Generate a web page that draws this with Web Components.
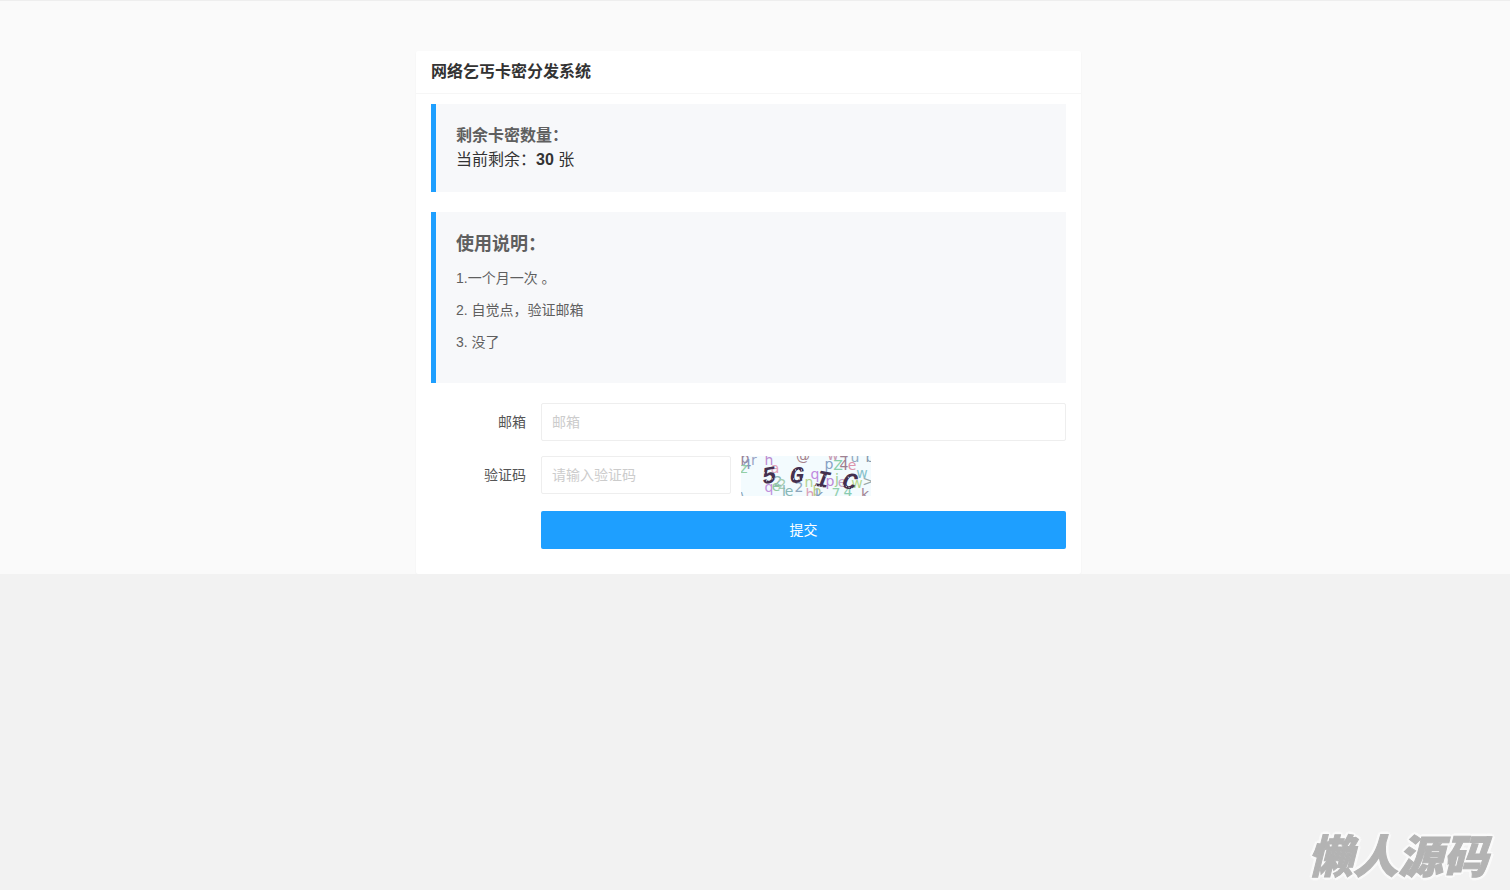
<!DOCTYPE html>
<html lang="zh-CN">
<head>
<meta charset="utf-8">
<meta name="viewport" content="width=device-width, initial-scale=1">
<title>网络乞丐卡密分发系统</title>
<style>
  html { background: #f2f2f2; }
  body { margin: 0; font: 14px/24px "Liberation Sans", "Noto Sans CJK SC", sans-serif; color: #333; }
</style>
</head>
<body>
<card-page>
  <panel-card heading="网络乞丐卡密分发系统">
    <quote-block heading="剩余卡密数量：">
      <stock-count count="30"></stock-count>
    </quote-block>
    <quote-block heading="使用说明：" size="large">
      <p>1.一个月一次 。</p>
      <p>2. 自觉点，验证邮箱</p>
      <p>3. 没了</p>
    </quote-block>
    <claim-form></claim-form>
  </panel-card>
</card-page>
<site-mark>懒人源码</site-mark>

<script>
class BaseElement extends HTMLElement {
  constructor() {
    super();
    this.attachShadow({ mode: "open" });
  }
  connectedCallback() {
    this.shadowRoot.innerHTML = this.render();
  }
}

class CardPage extends BaseElement {
  render() {
    return `<style>
      :host { display: block; box-sizing: border-box; background: #fafafa; border-top: 1px solid #eee; padding: 50px 13px 0 0; }
      main { width: 100%; max-width: 665px; margin: 0 auto; }
    </style><main><slot></slot></main>`;
  }
}

class PanelCard extends BaseElement {
  render() {
    return `<style>
      :host { display: block; background: #fff; border-radius: 2px; box-shadow: 0 1px 2px rgba(0,0,0,.05); }
      header { padding: 0 15px; border-bottom: 1px solid #f6f6f6; }
      h1 { margin: 0; font-size: 16px; line-height: 42px; font-weight: 700; }
      .body { display: flex; flex-direction: column; gap: 20px; padding: 10px 15px 25px; }
    </style>
    <header><h1>${this.getAttribute("heading")}</h1></header>
    <div class="body"><slot></slot></div>`;
  }
}

class QuoteBlock extends BaseElement {
  render() {
    return `<style>
      :host { display: block; padding: 20px; border-left: 5px solid #1e9fff; background: #f7f8fa; color: #5f5f5f; }
      h2 { margin: 0; font-size: 16px; line-height: 24px; font-weight: 700; }
      :host([size="large"]) h2 { margin-bottom: 10px; font-size: 18px; line-height: 25px; }
      ::slotted(p) { margin: 0 0 10px; line-height: 22px; }
    </style>
    <h2>${this.getAttribute("heading")}</h2><slot></slot>`;
  }
}

class StockCount extends BaseElement {
  render() {
    return `<style>:host { display: block; font-size: 16px; line-height: 24px; color: #333; }</style>当前剩余：<b>${this.getAttribute("count")}</b> 张`;
  }
}

class CaptchaImage extends BaseElement {
  render() {
    // [character, centre x, baseline y, colour]
    const noise = [
      ["p", 4, 7, "#9a8296"], ["4", 6, 13, "#8795b8"], ["r", 13, 9, "#9aa4c4"], ["z", 3, 17, "#93cfa5"],
      ["h", 28, 9, "#bd8bd0"], ["a", 34, 17, "#e3a0b8"], ["q", 28, 36, "#c08fdc"], ["2", 37, 30, "#8fb5b4"],
      ["2", 41, 33, "#a5cdb0"], ["e", 35, 35, "#90c8a0"], ["l", 43, 40, "#87b6b5"], ["e", 48, 40, "#87b6b5"],
      ["2", 58, 36, "#8ea6bd"], ["@", 62, 5, "#a58088"], ["w", 92, 4, "#c99bb2"], ["4", 103, 4, "#a08293"],
      ["u", 114, 6, "#92aac0"], ["b", 129, 6, "#8799ad"],
      ["p", 88, 13, "#87a1c5"], ["Z", 97, 14, "#88ceaa"], ["4", 103, 14, "#9b7d8d"], ["e", 111, 14, "#dc94ac"],
      ["w", 121, 22, "#86c1ca"], ["q", 74, 23, "#c08ade"], ["p", 89, 30, "#bb88d6"], ["j", 96, 28, "#9dcd91"],
      ["e", 101, 31, "#c4a3cb"], ["w", 116, 32, "#b4d68d"], [">", 127, 30, "#98a8a8"], ["n", 68, 31, "#b3d491"],
      ["h", 69, 43, "#dca1b8"], ["b", 76, 40, "#b9cc85"], ["k", 78, 44, "#819bc2"], ["7", 95, 42, "#92d0ae"],
      ["4", 107, 41, "#88cbb0"], ["k", 124, 43, "#a28593"], ["\\", 2, 46, "#8ba6b8"]
    ];
    // [character, centre x, centre y, rotation]
    const code = [["5", 28, 19, -10], ["G", 56, 19, 0], ["I", 82, 23, 10], ["C", 109, 25, 14]];
    return `<style>
      :host { display: block; }
      button { display: block; padding: 0; border: 0; background: none; cursor: pointer; }
      svg { display: block; }
      .noise { font: 14px "DejaVu Sans", sans-serif; text-anchor: middle; }
      .code { font: italic bold 24px "Liberation Mono", monospace; text-anchor: middle; fill: #44304f; }
      .scratch { stroke: #f3fbfe; stroke-width: 1; stroke-dasharray: 1 2; }
    </style>
    <button type="button" aria-label="刷新验证码"><svg width="130" height="40" viewBox="0 0 130 40">
      <rect width="130" height="40" fill="#f3fbfe"/>
      <g class="noise">${noise.map(([c, x, y, f]) => `<text x="${x}" y="${y}" fill="${f}">${c === ">" ? "&gt;" : c}</text>`).join("")}</g>
      <g class="code">${code.map(([c, x, y, r]) => `<text x="${x}" y="${y + 8}" transform="rotate(${r} ${x} ${y})">${c}</text>`).join("")}</g>
      <path class="scratch" d="M23 17l12-3M25 25l9-3M51 14h11M52 23h12M78 18l9 3M75 29l10 3M104 20l11 4M102 29l10 4"/>
    </svg></button>`;
  }
}

class ClaimForm extends BaseElement {
  render() {
    return `<style>
      :host { display: block; }
      form { display: grid; grid-template-columns: 95px minmax(0, 1fr); gap: 15px; align-items: start; }
      label { line-height: 38px; text-align: right; color: #555; }
      input, .submit { box-sizing: border-box; height: 38px; border-radius: 2px; font: inherit; }
      input { width: 100%; padding: 0 10px; border: 1px solid #eee; background: #fff; color: #333; outline: 0; }
      input::placeholder { color: #ccc; opacity: 1; }
      .captcha { display: flex; gap: 10px; }
      .captcha input { width: 190px; min-width: 0; }
      .submit { grid-column: 2; border: 0; background: #1e9fff; color: #fff; cursor: pointer; }
    </style>
    <form>
      <label for="email">邮箱</label>
      <input id="email" type="email" placeholder="邮箱">
      <label for="code">验证码</label>
      <div class="captcha"><input id="code" type="text" placeholder="请输入验证码" autocomplete="off"><captcha-image></captcha-image></div>
      <button class="submit" type="submit">提交</button>
    </form>`;
  }
}

class SiteMark extends BaseElement {
  render() {
    return `<style>
      :host { position: fixed; right: 22px; bottom: 9px; pointer-events: none;
        font: italic 900 45px/54px "Noto Sans CJK SC", sans-serif; color: #b3b3b3;
        -webkit-text-stroke: 1px #b3b3b3;
        text-shadow: 3px 0 #fafafa, -3px 0 #fafafa, 0 3px #fafafa, 0 -3px #fafafa,
          2px 2px #fafafa, -2px 2px #fafafa, 2px -2px #fafafa, -2px -2px #fafafa; }
    </style><slot></slot>`;
  }
}

customElements.define("card-page", CardPage);
customElements.define("panel-card", PanelCard);
customElements.define("quote-block", QuoteBlock);
customElements.define("stock-count", StockCount);
customElements.define("captcha-image", CaptchaImage);
customElements.define("claim-form", ClaimForm);
customElements.define("site-mark", SiteMark);
</script>
</body>
</html>
